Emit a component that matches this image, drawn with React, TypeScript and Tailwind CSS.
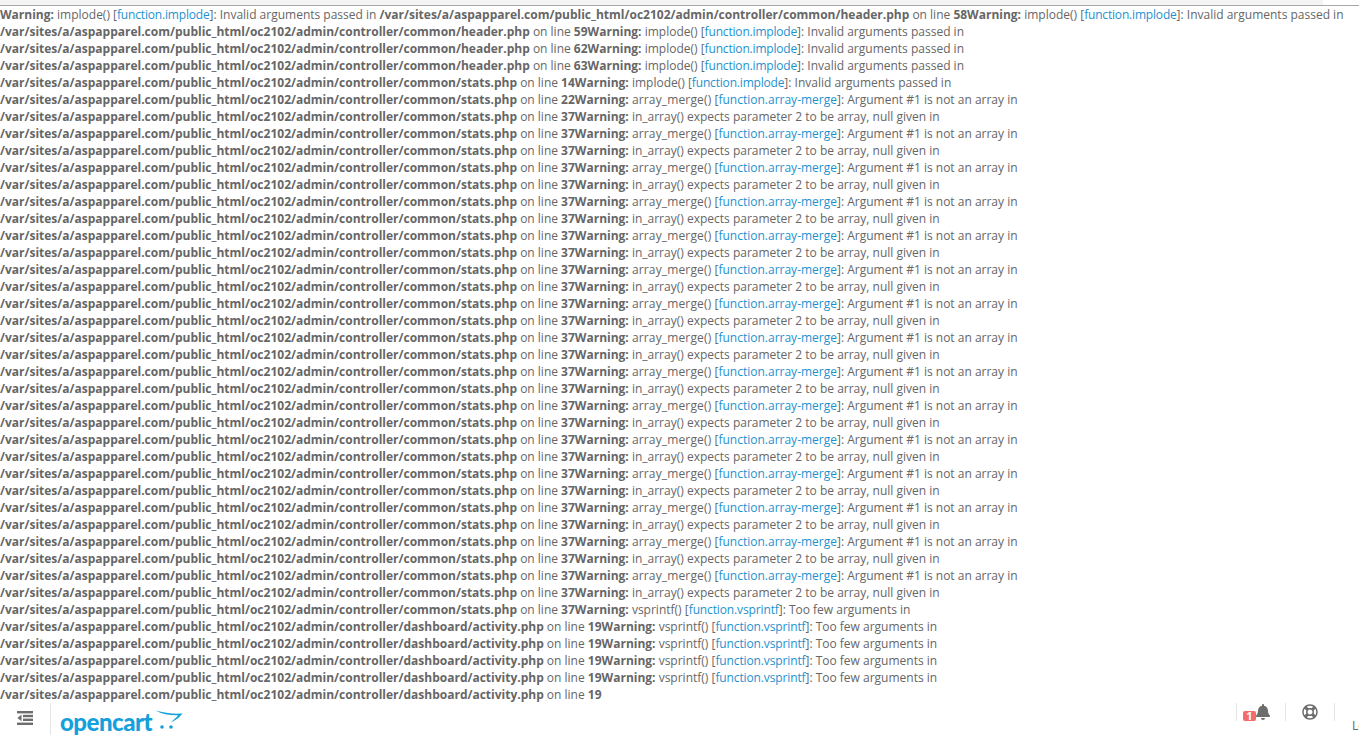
import { FaBell, FaRegLifeRing } from 'react-icons/fa';

const ROOT = '/var/sites/a/aspapparel.com/public_html/oc2102/admin/controller/';

type Warning = {
  fn: string;
  fnClass?: string;
  slug?: string;
  slugClass?: string;
  message: string;
  file: string;
  line: number;
};

const implode = (file: string, line: number): Warning => ({
  fn: 'implode()',
  slug: 'implode',
  slugClass: 'tracking-[-0.18px]',
  message: 'Invalid arguments passed',
  file,
  line,
});

const warnings: Warning[] = [
  implode('common/header.php', 58),
  implode('common/header.php', 59),
  implode('common/header.php', 62),
  implode('common/header.php', 63),
  implode('common/stats.php', 14),
  implode('common/stats.php', 22),
];

for (let i = 0; i < 30; i++) {
  warnings.push(
    i % 2 === 0
      ? {
          fn: 'array_merge()',
          fnClass: 'tracking-[0.15px]',
          slug: 'array-merge',
          message: 'Argument #1 is not an array',
          file: 'common/stats.php',
          line: 37,
        }
      : {
          fn: 'in_array()',
          message: 'expects parameter 2 to be array, null given',
          file: 'common/stats.php',
          line: 37,
        },
  );
}

for (let i = 0; i < 5; i++) {
  warnings.push({
    fn: 'vsprintf()',
    slug: 'vsprintf',
    slugClass: 'tracking-[-0.13px]',
    message: 'Too few arguments',
    file: 'dashboard/activity.php',
    line: 19,
  });
}

function WarningText({ w }: { w: Warning }) {
  return (
    <>
      <b className="font-bold">Warning:</b> <span className={w.fnClass}>{w.fn}</span>{' '}
      {w.slug ? (
        <>
          [<a className={`text-[#1e91cf] ${w.slugClass ?? ''}`}>function.{w.slug}</a>]:{' '}
        </>
      ) : null}
      {w.message} in <b className="font-bold">{ROOT + w.file}</b> on line{' '}
      <b className="font-bold">{w.line}</b>
    </>
  );
}

function MenuIcon() {
  return (
    <svg viewBox="0 0 16 14" className="h-[14px] w-[16px] text-[#6d6d6d]" fill="currentColor">
      <rect x="0" y="0" width="16" height="2.4" />
      <rect x="6" y="3.8" width="10" height="2.4" />
      <rect x="6" y="7.6" width="10" height="2.4" />
      <rect x="0" y="11.6" width="16" height="2.4" />
      <path d="M4.5 3.6v6.6L0.4 6.9z" />
    </svg>
  );
}

function Logo() {
  return (
    <div className="ml-[9px] mt-[5px] flex items-start">
      <span className="font-['Lato',sans-serif] text-[24px] font-black leading-[28px] tracking-[-0.5px] text-[#14a0dc]">
        opencart
      </span>
      <svg viewBox="0 0 28 22" className="ml-[3px] mt-[1px] h-[22px] w-[28px]">
        <path d="M0.5 1.5C9 4 18 5 27.5 4.5 25 8 21 11 16 13.5 19 10.5 21.5 8.5 23 6.3 15 6.5 7 5 0.5 1.5z" fill="#14a0dc" />
        <circle cx="7" cy="18" r="1.8" fill="#14a0dc" />
        <circle cx="16" cy="18" r="1.8" fill="#14a0dc" />
      </svg>
    </div>
  );
}

function Header() {
  return (
    <header className="flex h-[38px] items-start bg-white">
      <div className="flex h-[32px] w-[51px] items-center justify-center border-r border-[#e5e5e5] pb-[2px] pr-[1px]">
        <MenuIcon />
      </div>
      <Logo />
      <ul className="ml-auto flex h-full items-start">
        <li className="relative h-[18px] w-[50px] border-x border-[#e5e5e5]">
          <span className="absolute left-[6px] top-[8px] h-[10px] w-[13px] rounded-[2px] bg-[#f56b6b] text-center text-[11px] font-bold leading-[10px] text-white">
            1
          </span>
          <FaBell className="absolute left-[18px] top-[1px] text-[16px] text-[#6d6d6d]" />
        </li>
        <li className="flex h-[18px] w-[49px] items-center justify-center border-r border-[#e5e5e5] pb-[1px]">
          <FaRegLifeRing className="text-[16px] text-[#6d6d6d]" />
        </li>
        <li className="h-[38px] w-[24px] overflow-hidden whitespace-nowrap pl-[17px] pt-[14px] leading-[17px]">
          Logout
        </li>
      </ul>
    </header>
  );
}

export default function App() {
  return (
    <div className="h-screen overflow-hidden bg-white font-['Open_Sans',sans-serif] text-[12px] leading-[17px] text-[#666666]">
      <div className="h-[6px] border-b border-[#a8a8a8]">
        <div className="h-[5px] w-[1323px] bg-[#f4f4f4]" />
      </div>
      <div>
        {warnings.map((w, i) => (
          <WarningText key={i} w={w} />
        ))}
      </div>
      <Header />
    </div>
  );
}
